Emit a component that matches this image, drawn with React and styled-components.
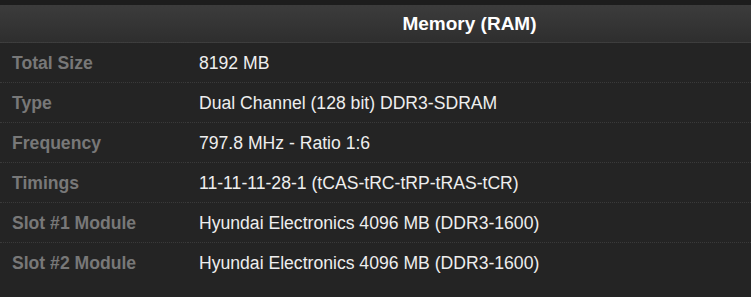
import React from "react";
import styled, { createGlobalStyle } from "styled-components";

const GlobalStyle = createGlobalStyle`
  html, body {
    margin: 0;
    padding: 0;
    background: #242424;
  }
  body {
    font-family: "Liberation Sans", Arial, sans-serif;
  }
`;

const Panel = styled.section`
  border-top: 5px solid #1d1d1d;
  background: #242424;
  min-height: 292px;
`;

const Spec = styled.div`
  display: grid;
  grid-template-columns: 188px 1fr;
`;

const HeadCell = styled.div`
  height: 37px;
  display: flex;
  align-items: center;
  justify-content: center;
  background: linear-gradient(#3c3c3c, #2e2e2e);
  border-bottom: 1px dotted #3e3e3e;
  color: #ffffff;
  font-weight: bold;
  font-size: 19px;
`;

const Cell = styled.div`
  box-sizing: border-box;
  height: 40px;
  padding-top: 2px;
  display: flex;
  align-items: center;
  font-size: 17.6px;
  border-bottom: ${(p) => (p.$last ? "1px solid transparent" : "1px dotted #3a3a3a")};
`;

const Label = styled(Cell)`
  padding-left: 12px;
  color: #787878;
  font-weight: bold;
`;

const Value = styled(Cell)`
  padding-left: 11px;
  color: #eeeeee;
`;

const rows = [
  ["Total Size", "8192 MB"],
  ["Type", "Dual Channel (128 bit) DDR3-SDRAM"],
  ["Frequency", "797.8 MHz - Ratio 1:6"],
  ["Timings", "11-11-11-28-1 (tCAS-tRC-tRP-tRAS-tCR)"],
  ["Slot #1 Module", "Hyundai Electronics 4096 MB (DDR3-1600)"],
  ["Slot #2 Module", "Hyundai Electronics 4096 MB (DDR3-1600)"],
];

export default function App() {
  return (
    <>
      <GlobalStyle />
      <Panel>
        <Spec>
          <HeadCell />
          <HeadCell>Memory (RAM)</HeadCell>
          {rows.map(([k, v], i) => {
            const last = i === rows.length - 1;
            return (
              <React.Fragment key={k}>
                <Label $last={last}>{k}</Label>
                <Value $last={last}>{v}</Value>
              </React.Fragment>
            );
          })}
        </Spec>
      </Panel>
    </>
  );
}
